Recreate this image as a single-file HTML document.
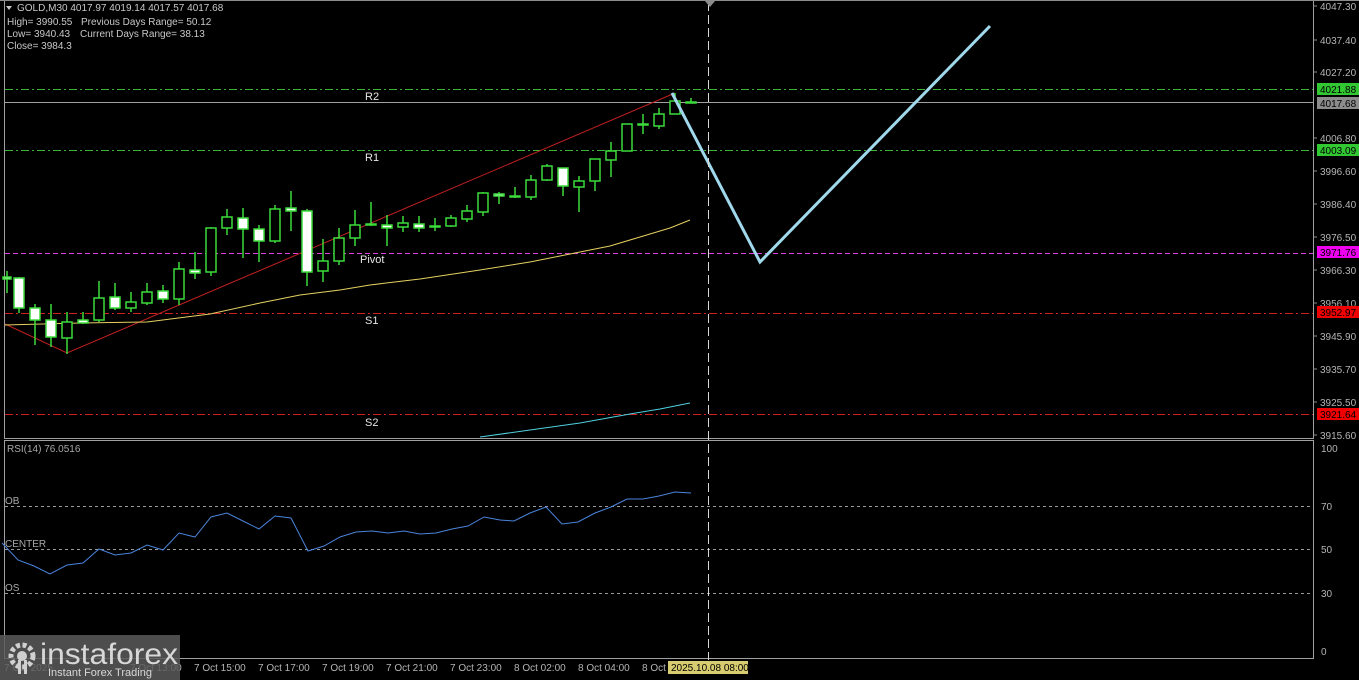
<!DOCTYPE html>
<html><head><meta charset="utf-8"><style>
html,body{margin:0;padding:0;background:#000;width:1359px;height:680px;overflow:hidden}
svg{display:block}
text{font-family:"Liberation Sans",sans-serif}
</style></head><body>
<svg width="1359" height="680" viewBox="0 0 1359 680" xmlns="http://www.w3.org/2000/svg">
<rect width="1359" height="680" fill="#000"/>
<g fill="none" stroke="#a0a0a0" stroke-width="1">
<rect x="4.5" y="0.5" width="1309" height="438"/>
<rect x="4.5" y="440.5" width="1309" height="218"/>
</g>
<g stroke-width="1" fill="none">
<line x1="5" y1="89.5" x2="1313" y2="89.5" stroke="#3cb43c" stroke-dasharray="8,3,2,3"/>
<line x1="5" y1="102.5" x2="1313" y2="102.5" stroke="#a0a0a0"/>
<line x1="5" y1="150.5" x2="1313" y2="150.5" stroke="#3cb43c" stroke-dasharray="8,3,2,3"/>
<line x1="5" y1="253.5" x2="1313" y2="253.5" stroke="#e040e0" stroke-dasharray="5,3"/>
<line x1="5" y1="313.5" x2="1313" y2="313.5" stroke="#d22020" stroke-dasharray="8,3,2,3"/>
<line x1="5" y1="414.5" x2="1313" y2="414.5" stroke="#d22020" stroke-dasharray="8,3,2,3"/>
<line x1="5" y1="506.5" x2="1313" y2="506.5" stroke="#9a9a9a" stroke-dasharray="3,3"/>
<line x1="5" y1="549.5" x2="1313" y2="549.5" stroke="#9a9a9a" stroke-dasharray="3,3"/>
<line x1="5" y1="593.5" x2="1313" y2="593.5" stroke="#9a9a9a" stroke-dasharray="3,3"/>
</g>
<g font-size="11" fill="#e6e6e6">
<text x="365" y="100">R2</text><text x="365" y="161">R1</text><text x="360" y="263">Pivot</text>
<text x="365" y="324">S1</text><text x="365" y="426">S2</text>
</g>
<polyline points="5,324 67,353 675,93" fill="none" stroke="#c02020" stroke-width="1"/>
<polyline points="5,325 80,323 147,322 210,314 260,303 300,295 340,290 370,285 420,279 480,270 530,262 570,254 610,246 640,237 670,228 690,220" fill="none" stroke="#e6d060" stroke-width="1"/>
<polyline points="480,437 530,430 580,423 630,414 660,409 690,403" fill="none" stroke="#50d0e0" stroke-width="1"/>
<g stroke="#3cdc3c" stroke-width="1.5">
<line x1="7" y1="271" x2="7" y2="293"/><rect x="3" y="277" width="8" height="2" fill="#fff"/>
<line x1="19" y1="277" x2="19" y2="313"/><rect x="14" y="278" width="10" height="30" fill="#fff"/>
<line x1="35" y1="304" x2="35" y2="345"/><rect x="30" y="308" width="10" height="12" fill="#fff"/>
<line x1="51" y1="304" x2="51" y2="347"/><rect x="46" y="320" width="10" height="17" fill="#fff"/>
<line x1="67" y1="312" x2="67" y2="354"/><rect x="62" y="322" width="10" height="16" fill="#000"/>
<line x1="83" y1="312" x2="83" y2="324"/><rect x="78" y="320" width="10" height="3" fill="#fff"/>
<line x1="99" y1="281" x2="99" y2="322"/><rect x="94" y="298" width="10" height="22" fill="#000"/>
<line x1="115" y1="283" x2="115" y2="310"/><rect x="110" y="297" width="10" height="11" fill="#fff"/>
<line x1="131" y1="292" x2="131" y2="312"/><rect x="126" y="302" width="10" height="6" fill="#000"/>
<line x1="147" y1="283" x2="147" y2="305"/><rect x="142" y="292" width="10" height="11" fill="#000"/>
<line x1="163" y1="285" x2="163" y2="303"/><rect x="158" y="291" width="10" height="8" fill="#fff"/>
<line x1="179" y1="262" x2="179" y2="305"/><rect x="174" y="269" width="10" height="30" fill="#000"/>
<line x1="195" y1="252" x2="195" y2="279"/><rect x="190" y="270" width="10" height="3" fill="#fff"/>
<line x1="211" y1="227" x2="211" y2="276"/><rect x="206" y="228" width="10" height="44" fill="#000"/>
<line x1="227" y1="209" x2="227" y2="235"/><rect x="222" y="217" width="10" height="11" fill="#000"/>
<line x1="243" y1="208" x2="243" y2="258"/><rect x="238" y="218" width="10" height="11" fill="#fff"/>
<line x1="259" y1="225" x2="259" y2="262"/><rect x="254" y="229" width="10" height="12" fill="#fff"/>
<line x1="275" y1="205" x2="275" y2="243"/><rect x="270" y="209" width="10" height="32" fill="#000"/>
<line x1="291" y1="191" x2="291" y2="231"/><rect x="286" y="208" width="10" height="3" fill="#fff"/>
<line x1="307" y1="209" x2="307" y2="286"/><rect x="302" y="211" width="10" height="61" fill="#fff"/>
<line x1="323" y1="239" x2="323" y2="282"/><rect x="318" y="261" width="10" height="10" fill="#000"/>
<line x1="339" y1="228" x2="339" y2="265"/><rect x="334" y="238" width="10" height="23" fill="#000"/>
<line x1="355" y1="210" x2="355" y2="246"/><rect x="350" y="225" width="10" height="13" fill="#000"/>
<line x1="371" y1="202" x2="371" y2="226"/><rect x="366" y="224" width="10" height="1" fill="#fff"/>
<line x1="387" y1="215" x2="387" y2="246"/><rect x="382" y="225" width="10" height="3" fill="#fff"/>
<line x1="403" y1="216" x2="403" y2="232"/><rect x="398" y="223" width="10" height="4" fill="#000"/>
<line x1="419" y1="216" x2="419" y2="232"/><rect x="414" y="224" width="10" height="4" fill="#fff"/>
<line x1="435" y1="218" x2="435" y2="231"/><rect x="430" y="226" width="10" height="1" fill="#fff"/>
<line x1="451" y1="215" x2="451" y2="227"/><rect x="446" y="218" width="10" height="8" fill="#000"/>
<line x1="467" y1="205" x2="467" y2="222"/><rect x="462" y="211" width="10" height="8" fill="#000"/>
<line x1="483" y1="192" x2="483" y2="216"/><rect x="478" y="193" width="10" height="19" fill="#000"/>
<line x1="499" y1="192" x2="499" y2="204"/><rect x="494" y="194" width="10" height="2" fill="#fff"/>
<line x1="515" y1="187" x2="515" y2="198"/><rect x="510" y="196" width="10" height="1" fill="#fff"/>
<line x1="531" y1="175" x2="531" y2="200"/><rect x="526" y="180" width="10" height="17" fill="#000"/>
<line x1="547" y1="164" x2="547" y2="181"/><rect x="542" y="166" width="10" height="14" fill="#000"/>
<line x1="563" y1="168" x2="563" y2="196"/><rect x="558" y="168" width="10" height="18" fill="#fff"/>
<line x1="579" y1="176" x2="579" y2="212"/><rect x="574" y="181" width="10" height="6" fill="#000"/>
<line x1="595" y1="159" x2="595" y2="191"/><rect x="590" y="159" width="10" height="22" fill="#000"/>
<line x1="611" y1="142" x2="611" y2="177"/><rect x="606" y="151" width="10" height="9" fill="#000"/>
<line x1="627" y1="124" x2="627" y2="151"/><rect x="622" y="124" width="10" height="27" fill="#000"/>
<line x1="643" y1="114" x2="643" y2="134"/><rect x="638" y="124" width="10" height="1" fill="#fff"/>
<line x1="659" y1="108" x2="659" y2="129"/><rect x="654" y="114" width="10" height="12" fill="#000"/>
<line x1="675" y1="93" x2="675" y2="114"/><rect x="670" y="101" width="10" height="13" fill="#000"/>
<line x1="691" y1="98" x2="691" y2="103"/><rect x="686" y="102" width="10" height="1" fill="#fff"/>
</g>
<polyline points="672,93 760,262 990,26" fill="none" stroke="#a0d8ec" stroke-width="3"/>
<polyline fill="none" stroke="#4a84dc" stroke-width="1" points="2,543 18,560 34,566 50,574 67,565 83,563 99,549 115,555 131,553 147,545 163,550 179,533 195,537 211,517 227,513 243,521 259,529 275,516 291,518 308,551 324,546 340,537 356,532 372,531 388,533 404,531 420,534 436,533 452,529 468,526 484,517 500,520 514,521 530,513 546,507 562,524 578,522 595,513 611,507 627,499 643,499 659,496 675,492 691,493"/>
<g font-size="10" fill="#a8a8a8">
<text x="7" y="452">RSI(14) 76.0516</text>
<text x="5" y="504">OB</text><text x="5" y="547">CENTER</text><text x="5" y="591">OS</text>
</g>
<line x1="708.5" y1="2" x2="708.5" y2="660" stroke="#d8d8d8" stroke-dasharray="9,4"/>
<polygon points="705,1 715,1 710,7" fill="#8c8c8c"/>
<line x1="0" y1="0.5" x2="1359" y2="0.5" stroke="#8c8c8c"/>
<g font-size="10" fill="#c8c8c8">
<polygon points="6,6 12,6 9,10" fill="#c8c8c8"/>
<text x="17" y="11">GOLD,M30  4017.97 4019.14 4017.57 4017.68</text>
<text x="7" y="25">High= 3990.55</text><text x="81" y="25">Previous Days Range= 50.12</text>
<text x="7" y="37">Low= 3940.43</text><text x="80" y="37">Current Days Range= 38.13</text>
<text x="7" y="49">Close= 3984.3</text>
</g>
<g font-size="10" fill="#b4b4b4">
<g stroke="#8c8c8c"><line x1="1313" y1="6" x2="1317" y2="6"/><line x1="1313" y1="40" x2="1317" y2="40"/><line x1="1313" y1="72" x2="1317" y2="72"/><line x1="1313" y1="138" x2="1317" y2="138"/><line x1="1313" y1="171" x2="1317" y2="171"/><line x1="1313" y1="204" x2="1317" y2="204"/><line x1="1313" y1="237" x2="1317" y2="237"/><line x1="1313" y1="270" x2="1317" y2="270"/><line x1="1313" y1="303" x2="1317" y2="303"/><line x1="1313" y1="336" x2="1317" y2="336"/><line x1="1313" y1="369" x2="1317" y2="369"/><line x1="1313" y1="402" x2="1317" y2="402"/><line x1="1313" y1="435" x2="1317" y2="435"/></g>
<text x="1320" y="10">4047.30</text><text x="1320" y="44">4037.40</text><text x="1320" y="76">4027.20</text>
<text x="1320" y="142">4006.80</text><text x="1320" y="175">3996.60</text><text x="1320" y="208">3986.40</text>
<text x="1320" y="241">3976.50</text><text x="1320" y="274">3966.30</text><text x="1320" y="307">3956.10</text>
<text x="1320" y="340">3945.90</text><text x="1320" y="373">3935.70</text><text x="1320" y="406">3925.50</text>
<text x="1320" y="439">3915.60</text>
<text x="1321" y="452">100</text><text x="1321" y="510">70</text><text x="1321" y="553">50</text><text x="1321" y="597">30</text><text x="1321" y="655">0</text>
</g>
<rect x="1317" y="83" width="42" height="12" fill="#32c832"/><text x="1320" y="93" font-size="10" fill="#000">4021.88</text>
<rect x="1317" y="97" width="42" height="12" fill="#8c8c8c"/><text x="1320" y="107" font-size="10" fill="#000">4017.68</text>
<rect x="1317" y="144" width="42" height="12" fill="#32c832"/><text x="1320" y="154" font-size="10" fill="#000">4003.09</text>
<rect x="1317" y="246" width="42" height="12" fill="#f000f0"/><text x="1320" y="256" font-size="10" fill="#000">3971.76</text>
<rect x="1317" y="306" width="42" height="12" fill="#f00000"/><text x="1320" y="316" font-size="10" fill="#000">3952.97</text>
<rect x="1317" y="408" width="42" height="12" fill="#f00000"/><text x="1320" y="418" font-size="10" fill="#000">3921.64</text>
<g font-size="10" fill="#b4b4b4">
<text x="4" y="671">7 Oct 2025</text><text x="130" y="671">7 Oct 13:00</text>
<text x="194" y="671">7 Oct 15:00</text><text x="258" y="671">7 Oct 17:00</text><text x="322" y="671">7 Oct 19:00</text>
<text x="386" y="671">7 Oct 21:00</text><text x="450" y="671">7 Oct 23:00</text><text x="514" y="671">8 Oct 02:00</text>
<text x="578" y="671">8 Oct 04:00</text><text x="642" y="671">8 Oct</text>
</g>
<rect x="668" y="661" width="80" height="13" fill="#d8cc70"/><text x="671" y="671" font-size="10" fill="#000">2025.10.08 08:00</text>
<rect x="0" y="635" width="180" height="45" fill="#5a5a5a" opacity="0.85"/>
<g fill="#d0d0d0">
<circle cx="22" cy="656" r="11" fill="none" stroke="#d0d0d0" stroke-width="5" stroke-dasharray="4,2.5"/>
<circle cx="22" cy="656" r="5"/>
<rect x="18" y="660" width="3" height="14"/><rect x="24" y="660" width="3" height="14"/>
</g>
<text x="40" y="664" font-size="30" fill="#d8d8d8" textLength="138" lengthAdjust="spacingAndGlyphs">instaforex</text>
<text x="48" y="676" font-size="11" fill="#d8d8d8">Instant Forex Trading</text>
</svg>
</body></html>
